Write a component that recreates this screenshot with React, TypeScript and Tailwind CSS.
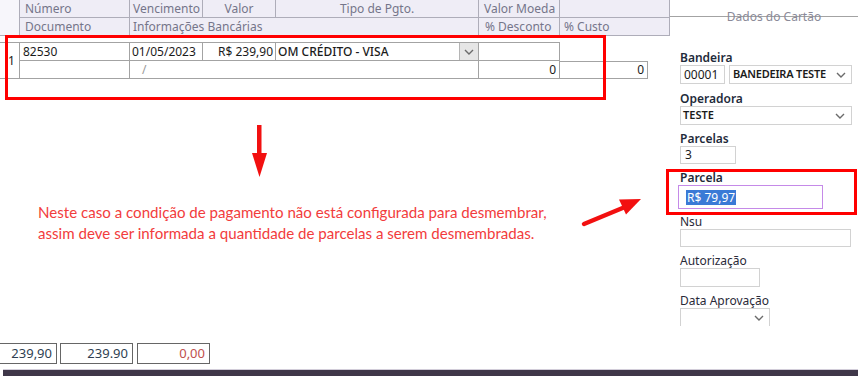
import React from "react";

function Chevron({ className = "" }: { className?: string }) {
  return (
    <svg width="10" height="6" viewBox="0 0 10 6" className={className}>
      <path d="M1 1l4 4 4-4" fill="none" stroke="#6b6b6b" strokeWidth="1.4" />
    </svg>
  );
}

const hb = "border-[#aeadb9]";
const db = "border-[#a3a3a3]";

function Header() {
  return (
    <div className="grid grid-cols-[20px_110px_73px_73px_203px_81px_110px] grid-rows-[18px_18px] bg-[#efedf6] text-[12px] leading-none text-[#75758a]">
      <div className={`row-span-2 bg-[#f7f6fb] border-r border-b ${hb}`} />
      <div className={`flex items-center pl-[5px] border-r border-b ${hb}`}>Número</div>
      <div className={`flex items-center pl-[3px] border-r border-b ${hb}`}>Vencimento</div>
      <div className={`flex items-center justify-center border-r border-b ${hb}`}>Valor</div>
      <div className={`flex items-center justify-center border-r border-b ${hb}`}>Tipo de Pgto.</div>
      <div className={`flex items-center pl-[5px] border-r border-b ${hb}`}>Valor Moeda</div>
      <div className={`border-r border-b ${hb}`} />
      <div className={`flex items-center pl-[5px] border-r border-b ${hb}`}>Documento</div>
      <div className={`col-span-3 flex items-center pl-[3px] border-r border-b ${hb}`}>Informações Bancárias</div>
      <div className={`flex items-center pl-[6px] border-r border-b ${hb}`}>% Desconto</div>
      <div className={`flex items-center pl-[4px] border-r border-b ${hb}`}>% Custo</div>
    </div>
  );
}

function DataRows() {
  return (
    <div className="mt-[6px] w-[648px] grid grid-cols-[20px_110px_73px_73px_203px_81px_88px] grid-rows-[19px_18px] text-[12px] leading-none text-[#1b1b1b]">
      <div className={`row-span-2 flex items-center pl-[8px] border-t border-b border-r ${db}`}>1</div>
      <div className={`flex items-center pl-[3px] border-t border-r border-b ${db}`}>82530</div>
      <div className={`flex items-center pl-[2px] border-t border-r border-b ${db}`}>01/05/2023</div>
      <div className={`flex items-center justify-end pr-[2px] border-t border-r border-b ${db}`}>R$ 239,90</div>
      <div className={`flex items-center border-t border-r border-b ${db}`}>
        <span className="pl-[2px] flex-1 font-medium">OM CRÉDITO - VISA</span>
        <div className="w-[19px] h-full flex items-center justify-center bg-[#e6e6e6] border-l border-[#b5b5b5]">
          <Chevron />
        </div>
      </div>
      <div className={`border-t border-r border-b ${db}`} />
      <div />
      <div className={`border-r border-b ${db}`} />
      <div className={`col-span-3 flex items-center pl-[12px] text-[#9a9a9a] border-r border-b ${db}`}>/</div>
      <div className={`flex items-center justify-end pr-[3px] border-r border-b ${db}`}>0</div>
      <div className={`flex items-center justify-end pr-[3px] border-t border-r border-b ${db}`}>0</div>
    </div>
  );
}

const lbl = "text-[12px] leading-[14px] font-semibold text-[#1f2b3b]";
const lblN = "text-[12px] leading-[14px] text-[#2a2a38]";
const inp = "border border-[#d2d2d2] bg-white";

function RightPanel() {
  return (
    <div className="w-[188px] flex flex-col">
      <div className="h-[36px] grid">
        <div className="[grid-area:1/1] mt-[16px] h-px bg-[#a3a3a3]" />
        <div className="[grid-area:1/1] pt-[11px] pl-[20px] text-center text-[12px] leading-none text-[#8a8a98]">Dados do Cartão</div>
      </div>
      <div className="pl-[10px] flex flex-col items-start">
        <div className={`${lbl} mt-[15px]`}>Bandeira</div>
        <div className="flex gap-[4px] h-[19px]">
          <div className={`${inp} w-[45px] flex items-center pl-[3px] text-[12px] text-[#1b1b1b]`}>00001</div>
          <div className={`${inp} w-[123px] flex items-center justify-between pl-[3px] pr-[5px] text-[11px] font-semibold tracking-[-0.2px] text-[#1b1b1b]`}>
            <span>BANEDEIRA TESTE</span>
            <Chevron />
          </div>
        </div>
        <div className={`${lbl} mt-[8px]`}>Operadora</div>
        <div className={`${inp} w-[172px] h-[19px] flex items-center justify-between pl-[2px] pr-[6px] text-[11px] font-semibold text-[#1b1b1b]`}>
          <span>TESTE</span>
          <Chevron />
        </div>
        <div className={`${lbl} mt-[7px]`}>Parcelas</div>
        <div className={`${inp} w-[56px] h-[18px] flex items-center pl-[4px] text-[12px] text-[#1b1b1b]`}>3</div>
        <div className={`${lbl} mt-[7px] leading-[13px]`}>Parcela</div>
        <div className="ml-[-2px] w-[145px] h-[24px] border-[1.5px] border-[#c58ae8] bg-white flex items-center pl-[7px]">
          <span className="bg-[#3a7ad6] text-white text-[12px] leading-[15px] px-px">R$ 79,97</span>
        </div>
        <div className={`${lblN} mt-[6px] leading-[13px]`}>Nsu</div>
        <div className={`${inp} w-[171px] h-[18px]`} />
        <div className={`${lblN} mt-[7px]`}>Autorização</div>
        <div className={`${inp} w-[80px] h-[19px]`} />
        <div className={`${lblN} mt-[7px]`}>Data Aprovação</div>
        <div className="w-[90px] h-[18px] border-t border-l border-r border-[#d2d2d2] flex items-center justify-end pr-[5px]">
          <Chevron />
        </div>
      </div>
    </div>
  );
}

export default function App() {
  return (
    <div className="relative w-[858px] h-[381px] bg-white overflow-hidden font-['Noto_Sans',sans-serif]">
      <div className="h-[343px] flex">
        <div className="w-[670px] flex flex-col">
          <Header />
          <DataRows />
        </div>
        <RightPanel />
      </div>
      <div className="flex h-[21px] ml-[-15px] text-[13px] leading-none">
        <div className="w-[72px] border border-[#666] flex items-center justify-end pr-[4px] text-[#2f3f52]">239,90</div>
        <div className="ml-[3px] w-[73px] border border-[#666] flex items-center justify-end pr-[4px] text-[#2f3f52]">239.90</div>
        <div className="ml-[4px] w-[73px] border border-[#666] flex items-center justify-end pr-[4px] text-[#c0504d]">0,00</div>
      </div>
      <div className="mt-[5px] ml-[3px] h-[7px] border-t border-[#d2cdd9] bg-[#3f3749]" />

      {/* annotations */}
      <div className="absolute left-[5px] top-[35px] w-[601px] h-[65px] border-[3px] border-[#ff0000]" />
      <div className="absolute left-[666px] top-[169px] w-[191px] h-[46px] border-[3.5px] border-[#ff0000]" />
      <svg className="absolute left-[250px] top-[123px]" width="20" height="56" viewBox="0 0 20 56">
        <rect x="7" y="2" width="4.5" height="31" fill="#f21010" />
        <polygon points="2,30 17,30 9.5,54" fill="#f21010" />
      </svg>
      <svg className="absolute left-[578px] top-[193px]" width="70" height="38" viewBox="0 0 70 38">
        <line x1="6" y1="31" x2="47" y2="14" stroke="#f21010" strokeWidth="4.5" strokeLinecap="round" />
        <polygon points="63,6 48,21.5 41,6.5" fill="#f21010" />
      </svg>
      <div className="absolute left-[38px] top-[202px] font-['Lato',sans-serif] text-[15.1px] leading-[21px] text-[#f23c3c]">
        <div>Neste caso a condição de pagamento não está configurada para desmembrar,</div>
        <div>assim deve ser informada a quantidade de parcelas a serem desmembradas.</div>
      </div>
    </div>
  );
}
